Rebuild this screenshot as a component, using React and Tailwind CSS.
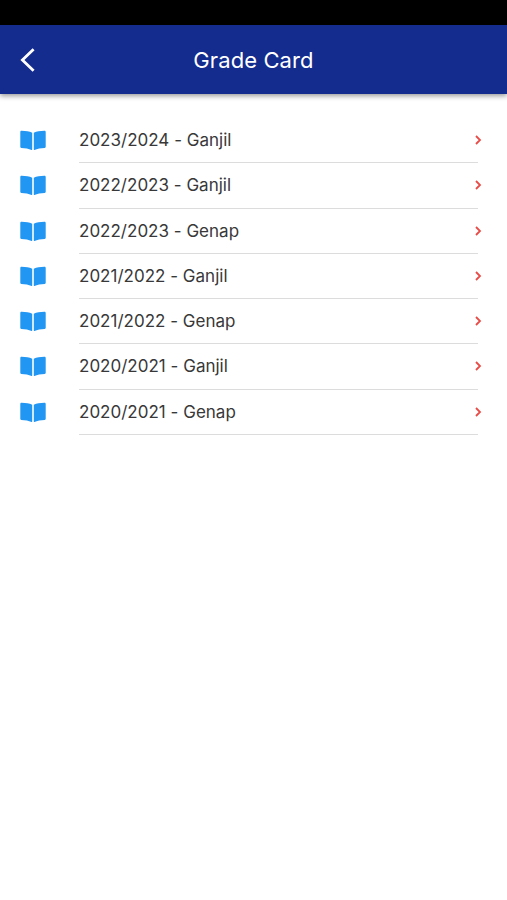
const terms = [
  "2023/2024 - Ganjil",
  "2022/2023 - Ganjil",
  "2022/2023 - Genap",
  "2021/2022 - Ganjil",
  "2021/2022 - Genap",
  "2020/2021 - Ganjil",
  "2020/2021 - Genap",
];

function Book() {
  return (
    <svg className="ml-5 block h-[21px] w-[26px] shrink-0 fill-[#2196f3]" viewBox="0 0 26 21">
      <path d="M12.2 2.8C9.3 1.3 6 .9 1.6.8.8.8.3 1.2.3 1.9v14.9c0 .7.4 1.1 1.1 1.1 4 .1 7.3.7 10.2 2.1.4.2.6 0 .6-.4z" />
      <path d="M13.8 2.8C16.7 1.3 20 .9 24.4.8c.8 0 1.3.4 1.3 1.1v14.9c0 .7-.4 1.1-1.1 1.1-4 .1-7.3.7-10.2 2.1-.4.2-.6 0-.6-.4z" />
    </svg>
  );
}

export default function App() {
  return (
    <div className="flex h-[900px] w-[507px] flex-col overflow-hidden bg-white font-['Inter',sans-serif]">
      <div className="h-[25px] shrink-0 bg-black" />
      <header className="grid h-[69px] shrink-0 grid-cols-[60px_1fr_60px] items-center bg-[#142c8e] text-white shadow-[0_2px_5px_rgba(0,0,0,0.4)]">
        <svg className="ml-5 h-6 w-4" viewBox="0 0 16 24" fill="none" stroke="currentColor" strokeWidth="2.8">
          <path d="M13.6 1.2 2.4 12l11.2 10.8" />
        </svg>
        <h1 className="text-center text-[22px] leading-8 font-normal tracking-[0.1px]">Grade Card</h1>
      </header>
      <main className="pt-6">
        {terms.map((term) => (
          <div key={term} className="flex h-[45.25px] items-center">
            <Book />
            <div className="ml-[33px] flex h-full w-[399px] items-center justify-between border-b border-[#dcdcdc]">
              <span className="text-[17px] leading-6 tracking-[0.01px] whitespace-nowrap text-[#383838]">{term}</span>
              <svg className="-mr-[3.5px] h-[10px] w-2 shrink-0" viewBox="0 0 8 10" fill="none" stroke="#e94b46" strokeWidth="1.8">
                <path d="m2 1 4 4-4 4" />
              </svg>
            </div>
          </div>
        ))}
      </main>
    </div>
  );
}
